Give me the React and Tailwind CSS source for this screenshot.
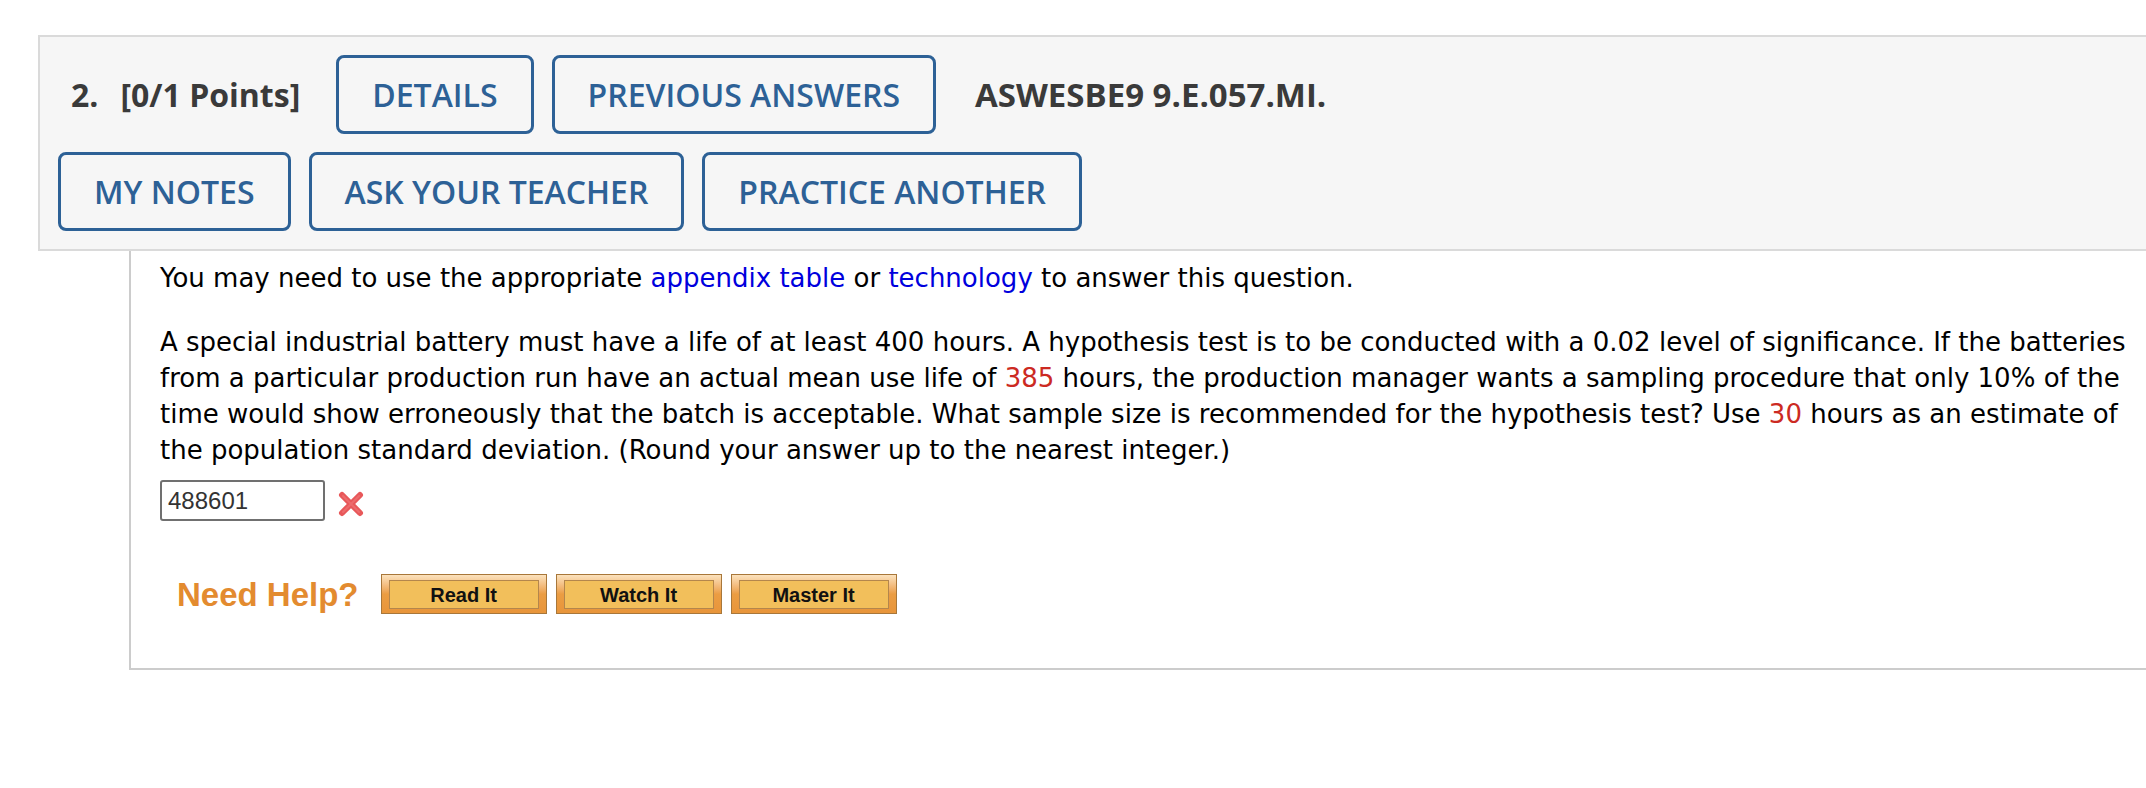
import React from "react";

function HeadButton({ children }) {
  return (
    <button className="h-[79px] px-[33px] border-[3px] border-[#2d6196] rounded-[8px] text-[#2d6196] text-[32px] font-semibold leading-none whitespace-nowrap bg-transparent">
      {children}
    </button>
  );
}

function HelpButton({ children }) {
  return (
    <div className="w-[166px] h-[40px] border border-[#a8773a] bg-gradient-to-b from-[#fbe2bd] via-[#eb9d43] to-[#e8953a] px-[7px] pt-[5px] pb-[4px]">
      <div className="h-full border border-[#b4864c] bg-[#f2bf5b] flex items-center justify-center text-[20px] font-bold text-[#111] leading-none" style={{ fontFamily: '"Liberation Sans", Arial, sans-serif' }}>
        {children}
      </div>
    </div>
  );
}

export default function App() {
  return (
    <div className="w-full h-[788px] bg-white overflow-hidden">
      <div className="pt-[35px] pl-[38px]">
        {/* question header */}
        <div
          className="w-[2130px] bg-[#f6f6f6] border-2 border-[#dadada] pt-[18px] pb-[18px] flex flex-col gap-[18px]"
          style={{ fontFamily: '"Open Sans", sans-serif' }}
        >
          <div className="flex items-center pl-[31px]">
            <div className="text-[32px] font-bold text-[#3a3a3a] whitespace-nowrap mr-[36px]">
              <span className="mr-[22px]">2.</span>[0/1 Points]
            </div>
            <div className="flex gap-[18px]">
              <HeadButton>DETAILS</HeadButton>
              <HeadButton>PREVIOUS ANSWERS</HeadButton>
            </div>
            <div className="ml-[39px] text-[33px] font-bold text-[#3a3a3a] whitespace-nowrap">ASWESBE9 9.E.057.MI.</div>
          </div>
          <div className="flex gap-[18px] pl-[18px]">
            <HeadButton>MY NOTES</HeadButton>
            <HeadButton>ASK YOUR TEACHER</HeadButton>
            <HeadButton>PRACTICE ANOTHER</HeadButton>
          </div>
        </div>

        {/* question body */}
        <div className="ml-[91px] w-[2100px] border-l-2 border-b-2 border-[#cccccc] pl-[29px] pt-[9px] pb-[54px]">
          <div className="w-[1990px] text-[26px] leading-[36px] text-black" style={{ fontFamily: '"DejaVu Sans", Verdana, sans-serif' }}>
            <p>
              You may need to use the appropriate <span className="text-[#0000dd]">appendix table</span> or{" "}
              <span className="text-[#0000dd]">technology</span> to answer this question.
            </p>
            <p className="mt-[28px]">
              A special industrial battery must have a life of at least 400 hours. A hypothesis test is to be conducted with a 0.02 level of significance. If the batteries from a particular production run have an actual mean use life of{" "}
              <span className="text-[#cc2a22]">385</span> hours, the production manager wants a sampling procedure that only 10% of the time would show erroneously that the batch is acceptable. What sample size is recommended for the hypothesis test? Use{" "}
              <span className="text-[#cc2a22]">30</span> hours as an estimate of the population standard deviation. (Round your answer up to the nearest integer.)
            </p>
          </div>

          <div className="mt-[12px] flex items-center gap-[12px]">
            <div
              className="w-[165px] h-[41px] border-2 border-[#707070] rounded-[3px] bg-white flex items-center pl-[6px] text-[24px] text-[#333]"
              style={{ fontFamily: '"Liberation Sans", Arial, sans-serif' }}
            >
              488601
            </div>
            <svg width="28" height="26" viewBox="0 0 28 26" className="mt-[6px]">
              <path d="M5 4 L23 22 M23 4 L5 22" stroke="#e8585a" strokeWidth="6" strokeLinecap="round" />
              <path d="M6 5 L22 21 M22 5 L6 21" stroke="#f07a7a" strokeWidth="2" strokeLinecap="round" opacity="0.6" />
            </svg>
          </div>

          <div className="mt-[53px] ml-[17px] flex items-center">
            <div
              className="text-[33px] font-bold text-[#e38b2f] mr-[22px] leading-none"
              style={{ fontFamily: '"Liberation Sans", Arial, sans-serif' }}
            >
              Need Help?
            </div>
            <div className="flex gap-[9px]">
              <HelpButton>Read It</HelpButton>
              <HelpButton>Watch It</HelpButton>
              <HelpButton>Master It</HelpButton>
            </div>
          </div>
        </div>
      </div>
    </div>
  );
}
